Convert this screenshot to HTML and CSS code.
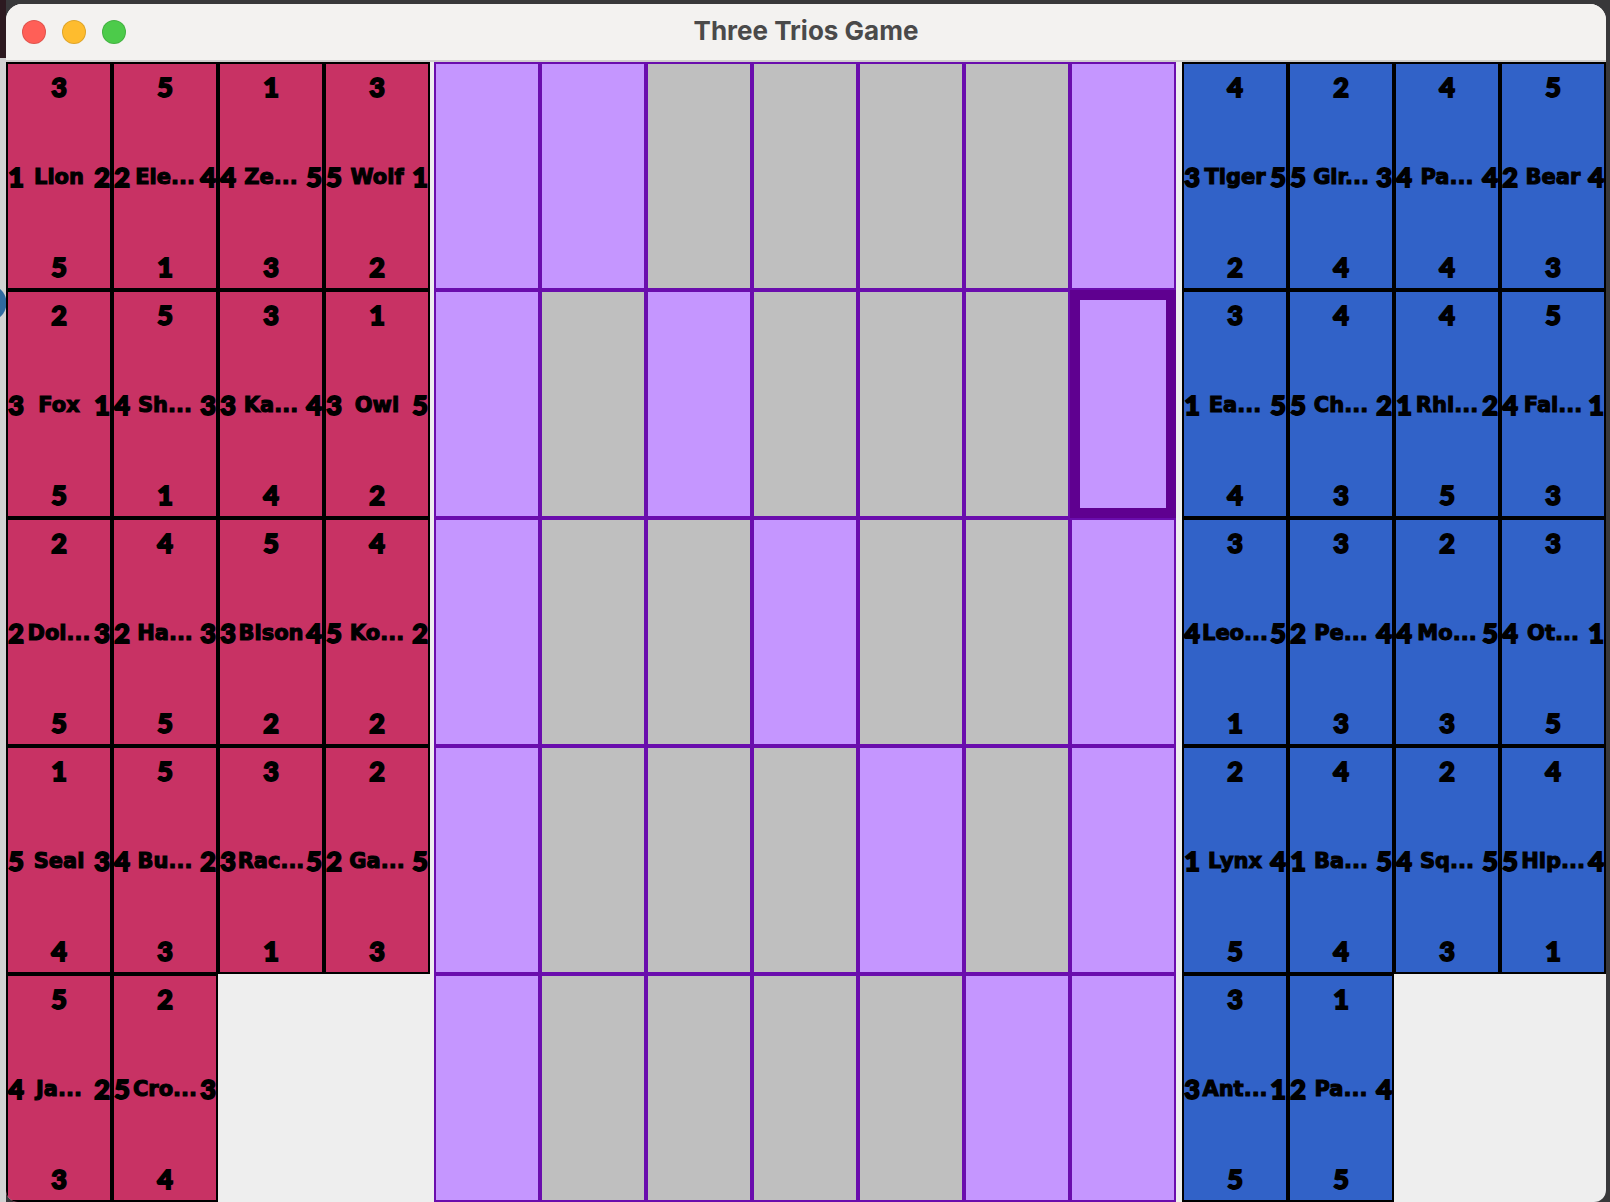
FILE: index.html
```html
<!DOCTYPE html>
<html lang="en">
<head>
    <meta charset="UTF-8">
    <title>Three Trios Game</title>
    <link rel="stylesheet" href="styles.css">
</head>
<body>
    <div class="window">
        <div class="titlebar">
            <div class="lights">
                <span class="light red"></span>
                <span class="light yellow"></span>
                <span class="light green"></span>
            </div>
            <div class="title">Three Trios Game</div>
        </div>
        <div class="game">
            <div class="hand">
                <div class="card red-card"><b class="n">3</b><b class="w">1</b><b class="name">Lion</b><b class="e">2</b><b class="s">5</b></div>
                <div class="card red-card"><b class="n">5</b><b class="w">2</b><b class="name">Ele...</b><b class="e">4</b><b class="s">1</b></div>
                <div class="card red-card"><b class="n">1</b><b class="w">4</b><b class="name">Ze...</b><b class="e">5</b><b class="s">3</b></div>
                <div class="card red-card"><b class="n">3</b><b class="w">5</b><b class="name">Wolf</b><b class="e">1</b><b class="s">2</b></div>
                <div class="card red-card"><b class="n">2</b><b class="w">3</b><b class="name">Fox</b><b class="e">1</b><b class="s">5</b></div>
                <div class="card red-card"><b class="n">5</b><b class="w">4</b><b class="name">Sh...</b><b class="e">3</b><b class="s">1</b></div>
                <div class="card red-card"><b class="n">3</b><b class="w">3</b><b class="name">Ka...</b><b class="e">4</b><b class="s">4</b></div>
                <div class="card red-card"><b class="n">1</b><b class="w">3</b><b class="name">Owl</b><b class="e">5</b><b class="s">2</b></div>
                <div class="card red-card"><b class="n">2</b><b class="w">2</b><b class="name">Dol...</b><b class="e">3</b><b class="s">5</b></div>
                <div class="card red-card"><b class="n">4</b><b class="w">2</b><b class="name">Ha...</b><b class="e">3</b><b class="s">5</b></div>
                <div class="card red-card"><b class="n">5</b><b class="w">3</b><b class="name">Bison</b><b class="e">4</b><b class="s">2</b></div>
                <div class="card red-card"><b class="n">4</b><b class="w">5</b><b class="name">Ko...</b><b class="e">2</b><b class="s">2</b></div>
                <div class="card red-card"><b class="n">1</b><b class="w">5</b><b class="name">Seal</b><b class="e">3</b><b class="s">4</b></div>
                <div class="card red-card"><b class="n">5</b><b class="w">4</b><b class="name">Bu...</b><b class="e">2</b><b class="s">3</b></div>
                <div class="card red-card"><b class="n">3</b><b class="w">3</b><b class="name">Rac...</b><b class="e">5</b><b class="s">1</b></div>
                <div class="card red-card"><b class="n">2</b><b class="w">2</b><b class="name">Ga...</b><b class="e">5</b><b class="s">3</b></div>
                <div class="card red-card"><b class="n">5</b><b class="w">4</b><b class="name">Ja...</b><b class="e">2</b><b class="s">3</b></div>
                <div class="card red-card"><b class="n">2</b><b class="w">5</b><b class="name">Cro...</b><b class="e">3</b><b class="s">4</b></div>
            </div>
            <div class="board">
                <div class="cell hole"></div><div class="cell hole"></div><div class="cell"></div><div class="cell"></div><div class="cell"></div><div class="cell"></div><div class="cell hole"></div>
                <div class="cell hole"></div><div class="cell"></div><div class="cell hole"></div><div class="cell"></div><div class="cell"></div><div class="cell"></div><div class="cell hole selected"></div>
                <div class="cell hole"></div><div class="cell"></div><div class="cell"></div><div class="cell hole"></div><div class="cell"></div><div class="cell"></div><div class="cell hole"></div>
                <div class="cell hole"></div><div class="cell"></div><div class="cell"></div><div class="cell"></div><div class="cell hole"></div><div class="cell"></div><div class="cell hole"></div>
                <div class="cell hole"></div><div class="cell"></div><div class="cell"></div><div class="cell"></div><div class="cell"></div><div class="cell hole"></div><div class="cell hole"></div>
            </div>
            <div class="hand">
                <div class="card blue-card"><b class="n">4</b><b class="w">3</b><b class="name">Tiger</b><b class="e">5</b><b class="s">2</b></div>
                <div class="card blue-card"><b class="n">2</b><b class="w">5</b><b class="name">Gir...</b><b class="e">3</b><b class="s">4</b></div>
                <div class="card blue-card"><b class="n">4</b><b class="w">4</b><b class="name">Pa...</b><b class="e">4</b><b class="s">4</b></div>
                <div class="card blue-card"><b class="n">5</b><b class="w">2</b><b class="name">Bear</b><b class="e">4</b><b class="s">3</b></div>
                <div class="card blue-card"><b class="n">3</b><b class="w">1</b><b class="name">Ea...</b><b class="e">5</b><b class="s">4</b></div>
                <div class="card blue-card"><b class="n">4</b><b class="w">5</b><b class="name">Ch...</b><b class="e">2</b><b class="s">3</b></div>
                <div class="card blue-card"><b class="n">4</b><b class="w">1</b><b class="name">Rhi...</b><b class="e">2</b><b class="s">5</b></div>
                <div class="card blue-card"><b class="n">5</b><b class="w">4</b><b class="name">Fal...</b><b class="e">1</b><b class="s">3</b></div>
                <div class="card blue-card"><b class="n">3</b><b class="w">4</b><b class="name">Leo...</b><b class="e">5</b><b class="s">1</b></div>
                <div class="card blue-card"><b class="n">3</b><b class="w">2</b><b class="name">Pe...</b><b class="e">4</b><b class="s">3</b></div>
                <div class="card blue-card"><b class="n">2</b><b class="w">4</b><b class="name">Mo...</b><b class="e">5</b><b class="s">3</b></div>
                <div class="card blue-card"><b class="n">3</b><b class="w">4</b><b class="name">Ot...</b><b class="e">1</b><b class="s">5</b></div>
                <div class="card blue-card"><b class="n">2</b><b class="w">1</b><b class="name">Lynx</b><b class="e">4</b><b class="s">5</b></div>
                <div class="card blue-card"><b class="n">4</b><b class="w">1</b><b class="name">Ba...</b><b class="e">5</b><b class="s">4</b></div>
                <div class="card blue-card"><b class="n">2</b><b class="w">4</b><b class="name">Sq...</b><b class="e">5</b><b class="s">3</b></div>
                <div class="card blue-card"><b class="n">4</b><b class="w">5</b><b class="name">Hip...</b><b class="e">4</b><b class="s">1</b></div>
                <div class="card blue-card"><b class="n">3</b><b class="w">3</b><b class="name">Ant...</b><b class="e">1</b><b class="s">5</b></div>
                <div class="card blue-card"><b class="n">1</b><b class="w">2</b><b class="name">Pa...</b><b class="e">4</b><b class="s">5</b></div>
            </div>
        </div>
    </div>
</body>
</html>
```

FILE: styles.css
```css
html, body {
    height: 100%;
}
body {
    margin: 0;
    padding: 4px 4px 0 6px;
    box-sizing: border-box;
    overflow: hidden;
    background-color: #38383a;
    background-image:
        radial-gradient(circle at -12px 303px, #2f6aa0 18px, transparent 19px),
        linear-gradient(#2c1a20 58px, #d2d2d2 58px);
    background-size: 6px 100%;
    background-repeat: no-repeat;
}
.window {
    width: 1600px;
    height: 1198px;
    border-radius: 16px 16px 12px 12px;
    overflow: hidden;
    background-color: #eeeeee;
}
.titlebar {
    height: 56px;
    border-bottom: 2px solid #cfcecd;
    background-color: #f3f2f0;
    display: flex;
    align-items: center;
    position: relative;
}
.lights {
    display: flex;
    gap: 16px;
    padding-left: 16px;
}
.light {
    width: 22px;
    height: 22px;
    border-radius: 50%;
    border: 1px solid rgba(0, 0, 0, 0.12);
}
.red {
    background-color: #ff5f57;
}
.yellow {
    background-color: #febc2e;
}
.green {
    background-color: #4ccb4a;
}
.title {
    position: absolute;
    left: 0;
    right: 0;
    top: 12px;
    text-align: center;
    font-family: Inter, "Liberation Sans", sans-serif;
    font-weight: 700;
    font-size: 26px;
    line-height: 30px;
    color: #4a4a4a;
}
.game {
    display: flex;
}
.hand {
    display: grid;
    grid-template-columns: repeat(4, 106px);
    grid-auto-rows: 228px;
    align-content: start;
}
.board {
    display: grid;
    grid-template-columns: repeat(7, 106px);
    grid-template-rows: repeat(5, 228px);
    margin: 0 6px 0 4px;
}
.cell {
    box-sizing: border-box;
    border: 2px solid #6a0dad;
    background-color: #bfbfbf;
}
.hole {
    background-color: #c596ff;
}
.selected {
    border: 10px solid #5f0090;
}
.card {
    box-sizing: border-box;
    border: 2px solid #000;
    display: grid;
    grid-template-columns: 16px minmax(0, 1fr) 16px;
    grid-template-rows: 45px 1fr 44px;
    align-items: center;
    justify-items: center;
    font-family: Lato, "Open Sans", sans-serif;
    font-weight: 900;
    font-size: 27px;
    color: #000;
    -webkit-text-stroke: 1.8px #000;
}
.card b {
    font-weight: 900;
    line-height: 1;
}
.red-card {
    background-color: #c83264;
}
.blue-card {
    background-color: #3162c8;
}
.n {
    grid-column: 1 / 4;
    grid-row: 1;
}
.s {
    grid-column: 1 / 4;
    grid-row: 3;
}
.w {
    grid-column: 1;
    grid-row: 2;
}
.e {
    grid-column: 3;
    grid-row: 2;
}
.card .name {
    grid-column: 2;
    grid-row: 2;
    font-family: "DejaVu Sans", sans-serif;
    font-weight: 700;
    font-size: 21px;
    padding-top: 1px;
    -webkit-text-stroke: 1.1px #000;
    white-space: nowrap;
}
```
